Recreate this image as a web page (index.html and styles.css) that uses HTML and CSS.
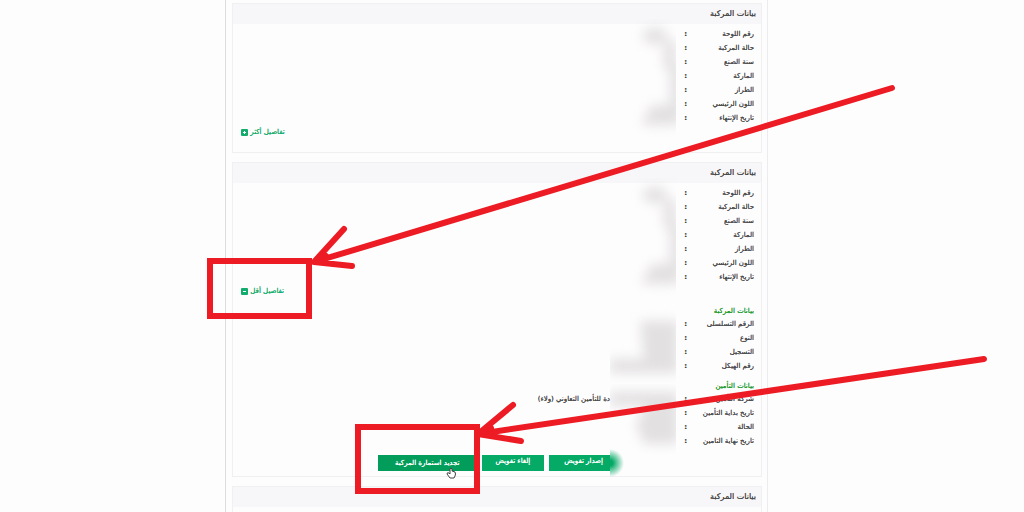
FILE: index.html
```html
<!DOCTYPE html>
<html lang="ar" dir="rtl">
<head>
    <meta charset="UTF-8">
    <meta name="viewport" content="width=device-width, initial-scale=1.0">
    <title>بيانات المركبة</title>
    <link rel="stylesheet" href="styles.css">
</head>
<body>
    <main class="page">
        <section class="card">
            <h2 class="card-title">بيانات المركبة</h2>
            <div class="details">
                <dl class="rows">
                    <div class="row"><dt>رقم اللوحة</dt><dd>:</dd></div>
                    <div class="row"><dt>حالة المركبة</dt><dd>:</dd></div>
                    <div class="row"><dt>سنة الصنع</dt><dd>:</dd></div>
                    <div class="row"><dt>الماركة</dt><dd>:</dd></div>
                    <div class="row"><dt>الطراز</dt><dd>:</dd></div>
                    <div class="row"><dt>اللون الرئيسي</dt><dd>:</dd></div>
                    <div class="row"><dt>تاريخ الإنتهاء</dt><dd>:</dd></div>
                </dl>
                <svg class="smudge" width="66" height="120" viewBox="0 -8 66 120" aria-hidden="true">
                    <g class="smudge-ink">
                        <ellipse cx="45" cy="9" rx="12" ry="8"/>
                        <rect x="54" y="14" width="12" height="28"/>
                        <rect x="60" y="38" width="12" height="50"/>
                        <path d="M32 96 L42 78 H70 V98 H32Z"/>
                    </g>
                </svg>
            </div>
            <a class="toggle" href="#">تفاصيل أكثر
                <svg width="7" height="7" viewBox="0 0 7 7" aria-hidden="true"><rect width="7" height="7" rx="1"/><path d="M2 3.5h3M3.5 2v3"/></svg>
            </a>
        </section>

        <section class="card">
            <h2 class="card-title">بيانات المركبة</h2>
            <div class="details">
                <dl class="rows">
                    <div class="row"><dt>رقم اللوحة</dt><dd>:</dd></div>
                    <div class="row"><dt>حالة المركبة</dt><dd>:</dd></div>
                    <div class="row"><dt>سنة الصنع</dt><dd>:</dd></div>
                    <div class="row"><dt>الماركة</dt><dd>:</dd></div>
                    <div class="row"><dt>الطراز</dt><dd>:</dd></div>
                    <div class="row"><dt>اللون الرئيسي</dt><dd>:</dd></div>
                    <div class="row"><dt>تاريخ الإنتهاء</dt><dd>:</dd></div>
                </dl>
                <svg class="smudge" width="66" height="120" viewBox="0 -8 66 120" aria-hidden="true">
                    <g class="smudge-ink">
                        <ellipse cx="45" cy="9" rx="12" ry="8"/>
                        <rect x="54" y="14" width="12" height="28"/>
                        <rect x="60" y="38" width="12" height="50"/>
                        <path d="M32 96 L42 78 H70 V98 H32Z"/>
                    </g>
                </svg>
            </div>
            <a class="toggle" href="#">تفاصيل أقل
                <svg width="7" height="7" viewBox="0 0 7 7" aria-hidden="true"><rect width="7" height="7" rx="1"/><path d="M2 3.5h3"/></svg>
            </a>

            <h3 class="group-title">بيانات المركبة</h3>
            <div class="details">
                <dl class="rows">
                    <div class="row"><dt>الرقم التسلسلى</dt><dd>:</dd></div>
                    <div class="row"><dt>النوع</dt><dd>:</dd></div>
                    <div class="row"><dt>التسجيل</dt><dd>:</dd></div>
                    <div class="row"><dt>رقم الهيكل</dt><dd>:</dd></div>
                </dl>
                <svg class="smudge" width="66" height="74" viewBox="0 -8 66 74" aria-hidden="true">
                    <path class="smudge-ink" d="M30 4 H68 V56 H0 V42 H34Z"/>
                </svg>
            </div>

            <h3 class="group-title">بيانات التأمين</h3>
            <div class="details">
                <dl class="rows">
                    <div class="row"><dt>شركة التأمين</dt><dd>:</dd><dd class="company">دة للتأمين التعاوني (ولاء)</dd></div>
                    <div class="row"><dt>تاريخ بداية التأمين</dt><dd>:</dd></div>
                    <div class="row"><dt>الحالة</dt><dd>:</dd></div>
                    <div class="row"><dt>تاريخ نهاية التامين</dt><dd>:</dd></div>
                </dl>
                <svg class="smudge" width="66" height="70" viewBox="0 -8 66 70" aria-hidden="true">
                    <path class="smudge-ink" d="M0 0 H68 V52 H34 L26 32 L36 14 H0Z"/>
                </svg>
            </div>

            <div class="actions">
                <button class="btn btn-cut" type="button">إصدار تفويض</button>
                <button class="btn" type="button">إلغاء تفويض</button>
                <button class="btn btn-active" type="button">تجديد استمارة المركبة</button>
            </div>
        </section>

        <section class="card">
            <h2 class="card-title">بيانات المركبة</h2>
        </section>
    </main>

    <svg class="markup" viewBox="0 0 1024 512" aria-hidden="true">
        <!-- hand cursor -->
        <path class="cursor" d="M450 478 L447 474 Q447 472 449 473 L450 474 V469 Q451 467 452 469 V471 L455 472 Q456 474 455 476 L454 478Z"/>
        <g class="pen">
            <rect x="210" y="261" width="99" height="55"/>
            <path d="M892 88 L314 262 M344 229 L314 262 L352 266 M326 256 L322 262"/>
            <rect x="358" y="427" width="119" height="64"/>
            <path d="M984 359 L478 434 M513 405 L478 434 L521 441 M491 428 L490 434"/>
        </g>
    </svg>
</body>
</html>
```

FILE: styles.css
```css
* {
    box-sizing: border-box;
}

body {
    position: relative;
    margin: 0;
    height: 100vh;
    overflow: hidden;
    background: #fefdfe;
    color: #4a4a4a;
    font-family: "DejaVu Sans", sans-serif;
    font-size: 7px;
    line-height: 14px;
    /* second pass of the glyphs, makes the tiny text a bit heavier */
    text-shadow: 0 0 0 currentColor;
}

.page {
    display: flex;
    flex-direction: column;
    gap: 9px;
    min-height: 100vh;
    margin: 0 25% 0 22%;
    padding: 3px 5px 0 6px;
    border: 1px solid #ececee;
    border-width: 0 1px;
    border-left-color: #dcdcdc;
}

.card {
    flex: none;
    display: flex;
    flex-direction: column;
    padding-bottom: 5px;
    border: 1px solid #f0eff1;
}

.card:first-child {
    padding-bottom: 13px;
}

.card-title {
    margin: 0 0 3px;
    padding: 0 5px;
    background: #f7f6f8;
    font-size: 8px;
    font-weight: normal;
    line-height: 20px;
}

.details {
    position: relative;
}

.rows {
    margin: 0;
    padding: 0 7px;
}

.row {
    display: grid;
    grid-template-columns: 67px 11px 1fr;
}

.row dd {
    margin: 0;
    font-weight: bold;
}

.row .company {
    padding-right: 66px;
    font-weight: normal;
}

/* blurred private values */
.smudge {
    position: absolute;
    top: -8px;
    right: 85px;
    overflow: hidden;
}

.smudge-ink {
    fill: #e2e0e1;
    filter: blur(6px);
}

.toggle {
    display: flex;
    align-items: center;
    align-self: flex-end;
    gap: 2px;
    margin-left: 8px;
    color: #12ac6c;
    text-decoration: none;
}

.toggle rect {
    fill: #12ac6c;
}

.toggle path {
    stroke: #fff;
    stroke-width: 1;
}

.group-title {
    margin: 7px 7px 0;
    color: #1f9a2b;
    font-size: 7px;
    font-weight: normal;
    line-height: 12px;
}

.actions {
    display: flex;
    gap: 5px;
    margin: 7px 151px 0;
}

.btn {
    position: relative;
    height: 16px;
    padding: 0 14px 4px;
    border: 0;
    background: #04aa66;
    color: #fff;
    font: inherit;
    line-height: 12px;
    text-shadow: inherit;
    white-space: nowrap;
    cursor: pointer;
}

.btn-cut {
    padding-right: 7px;
    padding-left: 15px;
}

.btn-cut::after {
    content: "";
    position: absolute;
    top: -6px;
    left: 100%;
    width: 14px;
    height: 28px;
    background: radial-gradient(14px 14px at left, #04aa66 20%, transparent 100%);
}

.btn-active {
    padding: 0 17px;
    background: #039d5b;
}

.markup {
    position: absolute;
    top: 0;
    left: 0;
    width: 100%;
    pointer-events: none;
}

.pen {
    fill: none;
    stroke: #ed1c24;
    stroke-width: 6;
    stroke-linecap: round;
}

.pen path {
    stroke-linejoin: round;
}

.cursor {
    fill: #fff;
    stroke: #444;
    stroke-width: 1;
}
```
